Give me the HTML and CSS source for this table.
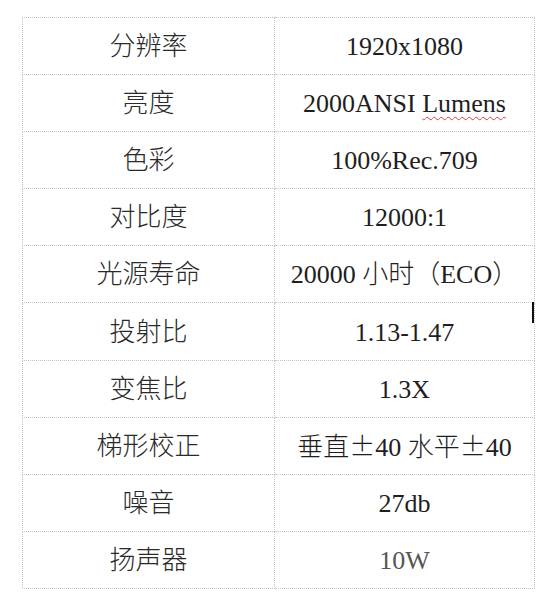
FILE: index.html
```html
<!DOCTYPE html>
<html lang="zh-CN">
<head>
<meta charset="utf-8">
<title>参数表</title>
<link rel="stylesheet" href="styles.css">
</head>
<body>
<div class="page">
  <table class="spec">
    <colgroup><col class="c1"><col class="c2"></colgroup>
    <tbody>
      <tr><td>分辨率</td><td>1920x1080</td></tr>
      <tr><td>亮度</td><td>2000ANSI <span class="spell">Lumens</span></td></tr>
      <tr><td>色彩</td><td>100%Rec.709</td></tr>
      <tr><td>对比度</td><td>12000:1</td></tr>
      <tr><td>光源寿命</td><td>20000 小时（ECO）</td></tr>
      <tr><td>投射比</td><td>1.13-1.47</td></tr>
      <tr><td>变焦比</td><td>1.3X</td></tr>
      <tr><td>梯形校正</td><td>垂直<span class="fw">±</span>40 水平<span class="fw">±</span>40</td></tr>
      <tr><td>噪音</td><td>27db</td></tr>
      <tr><td>扬声器</td><td class="faint">10W</td></tr>
    </tbody>
  </table>
  <div class="caret"></div>
</div>
</body>
</html>
```

FILE: styles.css
```css
html, body {
  margin: 0;
  padding: 0;
  background: #ffffff;
}

.page {
  position: relative;
  padding: 17px 0 0 22px;
  width: 554px;
  height: 606px;
  box-sizing: border-box;
}

.spec {
  border-collapse: collapse;
  table-layout: fixed;
  width: 512px;
  font-family: "Liberation Serif", "Noto Sans CJK SC", serif;
  font-size: 26px;
  font-weight: 300;
  color: #1e1e1e;
}

.spec .c1 { width: 252px; }
.spec .c2 { width: 260px; }

.spec td {
  border: 1px dotted #c4c4c4;
  height: 54.1px;
  padding: 2px 0 0 0;
  text-align: center;
  vertical-align: middle;
  white-space: nowrap;
  line-height: 1;
}

.spec td:first-child {
  color: #2a2a2a;
}

.spell {
  text-decoration: underline wavy #d04040;
  text-decoration-thickness: 1px;
  text-underline-offset: 4px;
}

.fw {
  display: inline-block;
  width: 1em;
  text-align: center;
  font-family: "Noto Sans CJK SC", sans-serif;
}

.faint {
  color: #555555;
}

.caret {
  position: absolute;
  left: 532px;
  top: 302px;
  width: 2px;
  height: 21px;
  background: #111111;
}
```
